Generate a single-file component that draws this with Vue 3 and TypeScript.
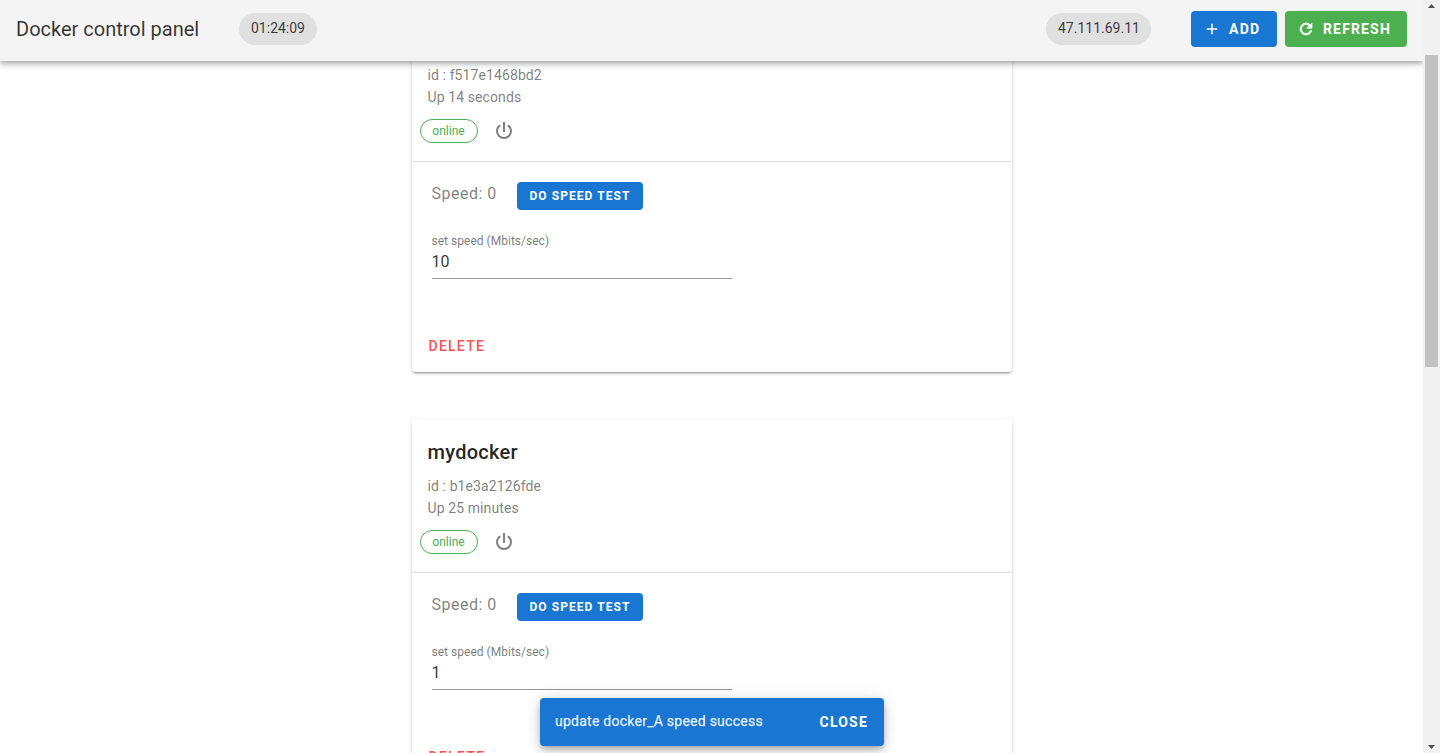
<script setup lang="ts">
import { ref } from 'vue'

interface Container {
  name: string
  id: string
  uptime: string
  status: string
  speed: number
  limit: string
}

const clock = '01:24:09'
const host = '47.111.69.11'
const snackbar = ref(true)

const containers = ref<Container[]>([
  { name: 'docker_A', id: 'f517e1468bd2', uptime: 'Up 14 seconds', status: 'online', speed: 0, limit: '10' },
  { name: 'mydocker', id: 'b1e3a2126fde', uptime: 'Up 25 minutes', status: 'online', speed: 0, limit: '1' },
])
</script>

<template>
  <div class="app">
    <div class="page">
      <header class="bar">
        <div class="title">Docker control panel</div>
        <span class="chip clock">{{ clock }}</span>
        <span class="spacer"></span>
        <span class="chip host">{{ host }}</span>
        <button class="btn primary add">
          <svg viewBox="0 0 24 24"><path d="M19,13H13V19H11V13H5V11H11V5H13V11H19V13Z" /></svg>
          <span>ADD</span>
        </button>
        <button class="btn success refresh">
          <svg class="bold" viewBox="0 0 24 24"><path d="M17.65,6.35C16.2,4.9 14.21,4 12,4A8,8 0 0,0 4,12A8,8 0 0,0 12,20C15.73,20 18.84,17.45 19.73,14H17.65C16.83,16.33 14.61,18 12,18A6,6 0 0,1 6,12A6,6 0 0,1 12,6C13.66,6 15.14,6.69 16.22,7.78L13,11H20V4L17.65,6.35Z" /></svg>
          <span>REFRESH</span>
        </button>
      </header>

      <main class="content">
        <section v-for="c in containers" :key="c.id" class="card">
          <div class="head">
            <h2>{{ c.name }}</h2>
            <p>id : {{ c.id }}</p>
            <p>{{ c.uptime }}</p>
          </div>
          <div class="state">
            <span class="status">{{ c.status }}</span>
            <svg class="power" viewBox="0 0 24 24"><path d="M16.56,5.44L15.11,6.89C16.84,7.94 18,9.83 18,12A6,6 0 0,1 12,18A6,6 0 0,1 6,12C6,9.83 7.16,7.94 8.88,6.88L7.44,5.44C5.36,6.88 4,9.28 4,12A8,8 0 0,0 12,20A8,8 0 0,0 20,12C20,9.28 18.64,6.88 16.56,5.44M13,3H11V13H13" /></svg>
          </div>
          <div class="speed">
            <span class="reading">Speed: {{ c.speed }}</span>
            <button class="btn primary small">DO SPEED TEST</button>
          </div>
          <label class="field">
            <span>set speed (Mbits/sec)</span>
            <input v-model="c.limit" type="text" />
          </label>
          <button class="delete">DELETE</button>
        </section>
      </main>
    </div>

    <div class="scrollbar">
      <i class="arrow up"></i>
      <i class="thumb"></i>
      <i class="arrow down"></i>
    </div>

    <div v-if="snackbar" class="snackbar">
      <span>update docker_A speed success</span>
      <button @click="snackbar = false">CLOSE</button>
    </div>
  </div>
</template>

<style>
html,
body {
  height: 100%;
  overflow: hidden;
  background: #fff;
}
</style>

<style scoped>
.app {
  position: relative;
  display: flex;
  height: 753px;
  overflow: hidden;
  font-family: Roboto, 'Liberation Sans', sans-serif;
  font-size: 16px;
  line-height: 1.5;
  color: rgba(0, 0, 0, 0.87);
}
.app *,
.app {
  box-sizing: border-box;
}
button {
  border: 0;
  padding: 0;
  background: none;
  font-family: inherit;
  cursor: pointer;
}
.page {
  flex: 1;
  min-width: 0;
  display: flex;
  flex-direction: column;
  overflow: hidden;
}
.bar {
  position: relative;
  z-index: 2;
  flex: none;
  display: flex;
  height: 61px;
  padding: 11px 16px;
  background: #f4f4f4;
  box-shadow: 0 2px 4px -1px rgba(0, 0, 0, 0.2), 0 4px 5px 0 rgba(0, 0, 0, 0.14),
    0 1px 10px 0 rgba(0, 0, 0, 0.12);
}
.title {
  width: 223px;
  color: rgba(0, 0, 0, 0.8);
  font-size: 20px;
  line-height: 36px;
  white-space: nowrap;
}
.chip {
  height: 32px;
  margin-top: 2px;
  padding: 0 12px;
  border-radius: 16px;
  background: #e0e0e0;
  color: rgba(0, 0, 0, 0.76);
  font-size: 14px;
  line-height: 31px;
  white-space: nowrap;
}
.clock {
  width: 78px;
}
.host {
  width: 105px;
  margin-right: 40px;
}
.spacer {
  flex: 1;
}
.btn {
  display: flex;
  align-items: center;
  height: 36px;
  border-radius: 4px;
  color: #fff;
  font-size: 14px;
  font-weight: 700;
  letter-spacing: 1.25px;
  white-space: nowrap;
}
.btn svg {
  width: 18px;
  height: 18px;
  margin-right: 8px;
  fill: currentColor;
}
.btn .bold {
  stroke: currentColor;
  stroke-width: 0.8;
}
.primary {
  background: #1976d2;
}
.success {
  background: #4caf50;
}
.add {
  width: 86px;
  margin-right: 8px;
  padding-left: 12px;
}
.refresh {
  width: 122px;
  padding-left: 12px;
  letter-spacing: 1.15px;
}
.content {
  flex: 1;
  min-height: 0;
  display: flex;
  flex-direction: column;
  align-items: center;
  gap: 48px;
}
.card {
  flex: none;
  width: 600px;
  height: 363px;
  border-radius: 4px;
  background: #fff;
  box-shadow: 0 3px 1px -2px rgba(0, 0, 0, 0.2), 0 2px 2px 0 rgba(0, 0, 0, 0.14),
    0 1px 5px 0 rgba(0, 0, 0, 0.12);
}
.card:first-child {
  margin-top: -52px;
}
.head {
  height: 110px;
  padding: 16px 16px 0;
}
.head h2 {
  margin: 0 0 7px;
  font-size: 20px;
  font-weight: 500;
  line-height: 32px;
  letter-spacing: 0.28px;
}
.head p {
  margin: 0;
  color: rgba(0, 0, 0, 0.52);
  font-size: 14px;
  line-height: 22px;
  letter-spacing: 0.1px;
}
.state {
  display: flex;
  align-items: center;
  height: 43px;
  padding: 0 8px 19px;
  border-bottom: 1px solid #e0e0e0;
}
.status {
  width: 58px;
  height: 24px;
  border: 1px solid #4caf50;
  border-radius: 12px;
  color: #4caf50;
  font-size: 12px;
  line-height: 22px;
  text-align: center;
}
.power {
  width: 24px;
  height: 24px;
  margin-left: 14px;
  fill: rgba(0, 0, 0, 0.5);
}
.speed {
  display: flex;
  align-items: flex-start;
  height: 67px;
  padding: 20px 20px 0;
}
.reading {
  width: 85px;
  color: rgba(0, 0, 0, 0.52);
  font-weight: 400;
  line-height: 24px;
  letter-spacing: 0.5px;
}
.small {
  justify-content: center;
  width: 126px;
  height: 28px;
  padding-left: 1px;
  font-size: 12px;
  letter-spacing: 1.07px;
}
.field {
  display: block;
  width: 300px;
  height: 50px;
  margin-left: 20px;
  border-bottom: 1px solid #949494;
}
.field span {
  display: block;
  height: 23px;
  color: rgba(0, 0, 0, 0.54);
  font-size: 12px;
  line-height: 24px;
  letter-spacing: 0.02px;
}
.field input {
  display: block;
  width: 100%;
  height: 20px;
  padding: 0;
  border: 0;
  outline: 0;
  background: none;
  color: rgba(0, 0, 0, 0.8);
  font-family: inherit;
  font-size: 16px;
  line-height: 20px;
}
.delete {
  display: block;
  margin: 49px 0 0 17px;
  height: 36px;
  color: #ff5252;
  font-size: 14px;
  font-weight: 500;
  letter-spacing: 1.25px;
}
.scrollbar {
  flex: none;
  display: flex;
  flex-direction: column;
  align-items: center;
  width: 17px;
  padding: 4px 0;
  background: #f1f1f1;
}
.arrow {
  width: 7px;
  height: 4px;
  background: #505050;
}
.up {
  clip-path: polygon(50% 0, 100% 100%, 0 100%);
}
.down {
  margin-top: auto;
  clip-path: polygon(0 0, 100% 0, 50% 100%);
}
.thumb {
  width: 13px;
  height: 312px;
  margin-top: 47px;
  background: #c1c1c1;
}
.snackbar {
  position: absolute;
  z-index: 3;
  left: 540px;
  bottom: 7px;
  display: flex;
  align-items: center;
  justify-content: space-between;
  width: 344px;
  height: 48px;
  padding: 0 16px 0 15px;
  border-radius: 4px;
  background: #1976d2;
  box-shadow: 0 3px 5px -1px rgba(0, 0, 0, 0.2), 0 6px 10px 0 rgba(0, 0, 0, 0.14),
    0 1px 18px 0 rgba(0, 0, 0, 0.12);
  color: rgba(255, 255, 255, 0.87);
  font-size: 14px;
  letter-spacing: 0.25px;
}
.snackbar span {
  padding-bottom: 2px;
  -webkit-text-stroke: 0.25px currentColor;
}
.snackbar button {
  color: #fff;
  font-size: 14px;
  font-weight: 700;
  letter-spacing: 1.2px;
}
</style>
